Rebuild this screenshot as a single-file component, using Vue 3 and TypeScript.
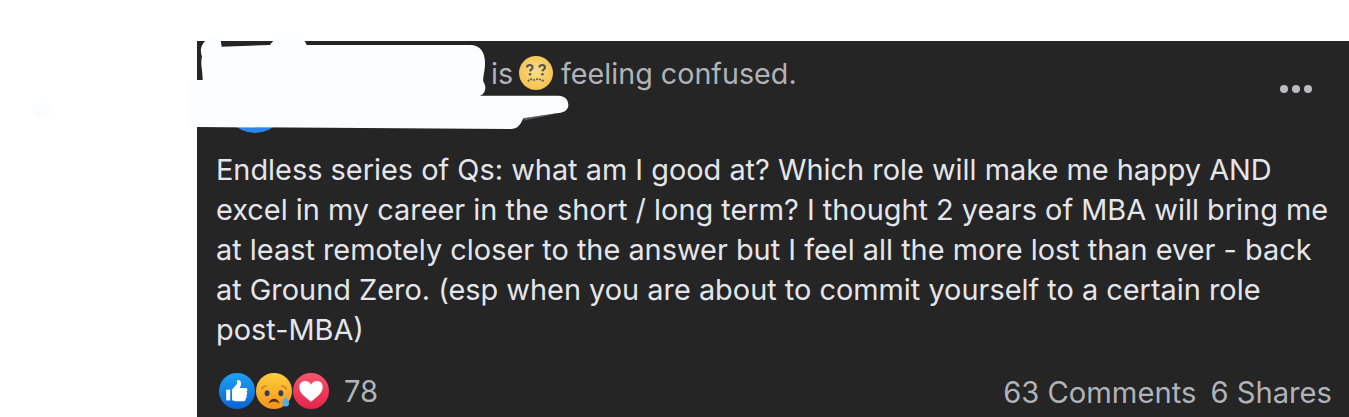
<script setup lang="ts">
const lines: string[] = [
  'Endless series of Qs: what am I good at? Which role will make me happy AND',
  'excel in my career in the short / long term? I thought 2 years of MBA will bring me',
  'at least remotely closer to the answer but I feel all the more lost than ever - back',
  'at Ground Zero. (esp when you are about to commit yourself to a certain role',
  'post-MBA)',
]
</script>

<template>
  <div class="page">
    <div class="smudge"></div>
    <article class="card">
      <header class="head">
        <div class="avatar"></div>
        <div class="status">
          <span>is</span>
          <svg class="feel" viewBox="0 0 34 34">
            <defs>
              <radialGradient id="feelFace" cx="50%" cy="45%" r="55%">
                <stop offset="0" stop-color="#f6dd92" />
                <stop offset="1" stop-color="#f4c24a" />
              </radialGradient>
            </defs>
            <circle cx="17" cy="17" r="17" fill="url(#feelFace)" />
            <path d="M8 11.500c0-3.400 5.600-3.400 5.600 0 0 1.800-2.300 1.900-2.600 3.800M20.400 11.500c0-3.400 5.600-3.400 5.600 0 0 1.800-2.300 1.900-2.600 3.800" fill="none" stroke="#57554d" stroke-width="2.100" />
            <circle cx="11" cy="18.300" r="1.300" fill="#57554d" />
            <circle cx="23.400" cy="18.300" r="1.300" fill="#57554d" />
            <path d="M9 25.500c1.500-2.600 3-2.400 4-2 1.400.5 2.600.5 4 0 1.400-.5 2.600-.5 4 0 1 .4 2.500.6 4 2" fill="none" stroke="#6b6148" stroke-width="1.800" stroke-dasharray="2 1" />
          </svg>
          <span class="feeling">feeling confused.</span>
        </div>
        <div class="more"><i></i><i></i><i></i></div>
        <svg class="redact" viewBox="0 0 1200 330">
          <path d="M50 30C60 15 85 15 92 30L95 50 240 45C250 30 275 10 300 10 325 10 345 30 350 45L840 45C870 45 885 65 885 100 885 125 878 140 880 155 890 170 888 190 870 197L1105 197C1128 198 1136 212 1135 228 1132 244 1118 248 1100 250L1000 265C992 282 985 296 965 297L20 291 0 290 0 150 38 150C38 120 30 100 36 80 28 60 35 40 50 30Z" fill="#fcfdff" />
          <path d="M1000 265L1002 272C1040 262 1080 258 1100 250Z" fill="#8f9094" opacity=".5" />
        </svg>
      </header>

      <div class="body">
        <p v-for="line in lines" :key="line">{{ line }}</p>
      </div>

      <footer class="foot">
        <div class="reactions">
          <svg class="react" viewBox="0 0 40 40">
            <defs>
              <linearGradient id="likeBg" x1="0" y1="0" x2="0" y2="1">
                <stop offset="0" stop-color="#1ea1f2" />
                <stop offset="1" stop-color="#0a64d8" />
              </linearGradient>
            </defs>
            <circle cx="20" cy="20" r="20" fill="url(#likeBg)" />
            <path d="M8 18.500h4.500v12H8z" fill="#fff" />
            <path d="M14.500 30V18.400l4.700-5.300c.8-1 1-2.600 1-4.300 0-1.800 3.800-1.500 4.200 1.800.3 2.200-.4 4.400-1.400 6.200h6.300c2.600 0 3 3 1.200 4 1.300 1 1.200 3-.2 3.800 1 1.200.6 3-.8 3.600.6 1.600-.4 3.100-2.400 3.100h-8.400c-1.800 0-3-.5-4.200-1.300z" fill="#fff" />
          </svg>
          <svg class="react" viewBox="0 0 40 40">
            <defs>
              <linearGradient id="sadBg" x1="0" y1="0" x2="0" y2="1">
                <stop offset="0" stop-color="#fbd03c" />
                <stop offset="1" stop-color="#f8921c" />
              </linearGradient>
            </defs>
            <circle cx="20" cy="20" r="20" fill="url(#sadBg)" />
            <path d="M6.500 17.500c1-1.800 2.800-3 5-3.300M33.500 17.500c-1-1.800-2.800-3-5-3.300" fill="none" stroke="#b9651a" stroke-width="1.300" stroke-linecap="round" />
            <ellipse cx="12.300" cy="22.500" rx="2.700" ry="3.300" fill="#363c5a" />
            <ellipse cx="27.700" cy="22.500" rx="2.700" ry="3.300" fill="#363c5a" />
            <path d="M13.500 34c1.500-3.500 4-5.500 6.500-5.500s5 2 6.500 5.500c-2-1.300-4.200-2-6.500-2s-4.500.7-6.500 2z" fill="#5a2f10" />
            <path d="M33 26c2.300 3.300 3.700 5.300 3.700 7.500a3.700 3.700 0 0 1-7.400 0c0-2.200 1.400-4.200 3.700-7.500z" fill="#4bb1ee" />
          </svg>
          <svg class="react love" viewBox="0 0 40 40">
            <defs>
              <linearGradient id="loveBg" x1="0" y1="0" x2="0" y2="1">
                <stop offset="0" stop-color="#f7566e" />
                <stop offset="1" stop-color="#e5224a" />
              </linearGradient>
            </defs>
            <circle cx="20" cy="20" r="20" fill="url(#loveBg)" />
            <path d="M20 32C11 25 7 21 7 15.500 7 11.500 10 9 13.500 9c2.800 0 5.200 1.500 6.500 4 1.300-2.500 3.700-4 6.500-4C30 9 33 11.500 33 15.500 33 21 29 25 20 32z" fill="#fff" />
          </svg>
          <span class="count">78</span>
        </div>
        <div class="stats">
          <span>63 Comments</span>
          <span>6 Shares</span>
        </div>
      </footer>
    </article>
  </div>
</template>

<style scoped>
.page {
  width: 1349px;
  height: 417px;
  overflow: hidden;
  background: #fff;
  padding: 41px 0 0 197px;
  box-sizing: border-box;
  position: relative;
  font-family: Inter, "Liberation Sans", sans-serif;
}
.smudge {
  position: absolute;
  left: 32px;
  top: 103px;
  width: 19px;
  height: 16px;
  border-radius: 50%;
  background: #fbfcfd;
}
.card {
  width: 1152px;
  height: 376px;
  background: #252525;
  box-sizing: border-box;
  padding: 0 17px 0 19px;
  display: flex;
  flex-direction: column;
}
.head {
  position: relative;
  height: 89px;
  flex: none;
  display: flex;
  align-items: flex-start;
  justify-content: space-between;
}
.avatar {
  position: absolute;
  left: 4px;
  top: 16px;
  width: 70px;
  height: 76px;
  border-radius: 50%;
  background: #2c84ee;
}
.redact {
  position: absolute;
  left: -26px;
  top: -11px;
  width: 400px;
  height: 110px;
}
.status {
  margin: 14px 0 0 275px;
  display: flex;
  align-items: center;
  gap: 6px;
  height: 36px;
  color: #b0b3b8;
  font-size: 28.700px;
}
.feel {
  width: 34px;
  height: 34px;
}
.feeling {
  margin-left: 2px;
}
.more {
  display: flex;
  gap: 4px;
  margin: 44px 20px 0 0;
}
.more i {
  width: 8px;
  height: 8px;
  border-radius: 50%;
  background: #b9bbc0;
}
.body {
  color: #e4e6eb;
  font-size: 28.900px;
  line-height: 40px;
  padding-top: 20px;
  white-space: nowrap;
}
.body p {
  margin: 0;
}
.foot {
  margin-top: auto;
  height: 66px;
  display: flex;
  align-items: flex-start;
  justify-content: space-between;
  padding-top: 22px;
  box-sizing: border-box;
  color: #b0b3b8;
  font-size: 29.200px;
}
.reactions {
  display: flex;
  align-items: center;
  gap: 1px;
  height: 36px;
  margin-left: 3px;
}
.react {
  width: 36px;
  height: 36px;
  flex: none;
}
.love {
  margin-right: 14px;
}
.stats {
  display: flex;
  gap: 14px;
  height: 38px;
  align-items: center;
}
</style>

<style>
body {
  background: #fff;
}
</style>
